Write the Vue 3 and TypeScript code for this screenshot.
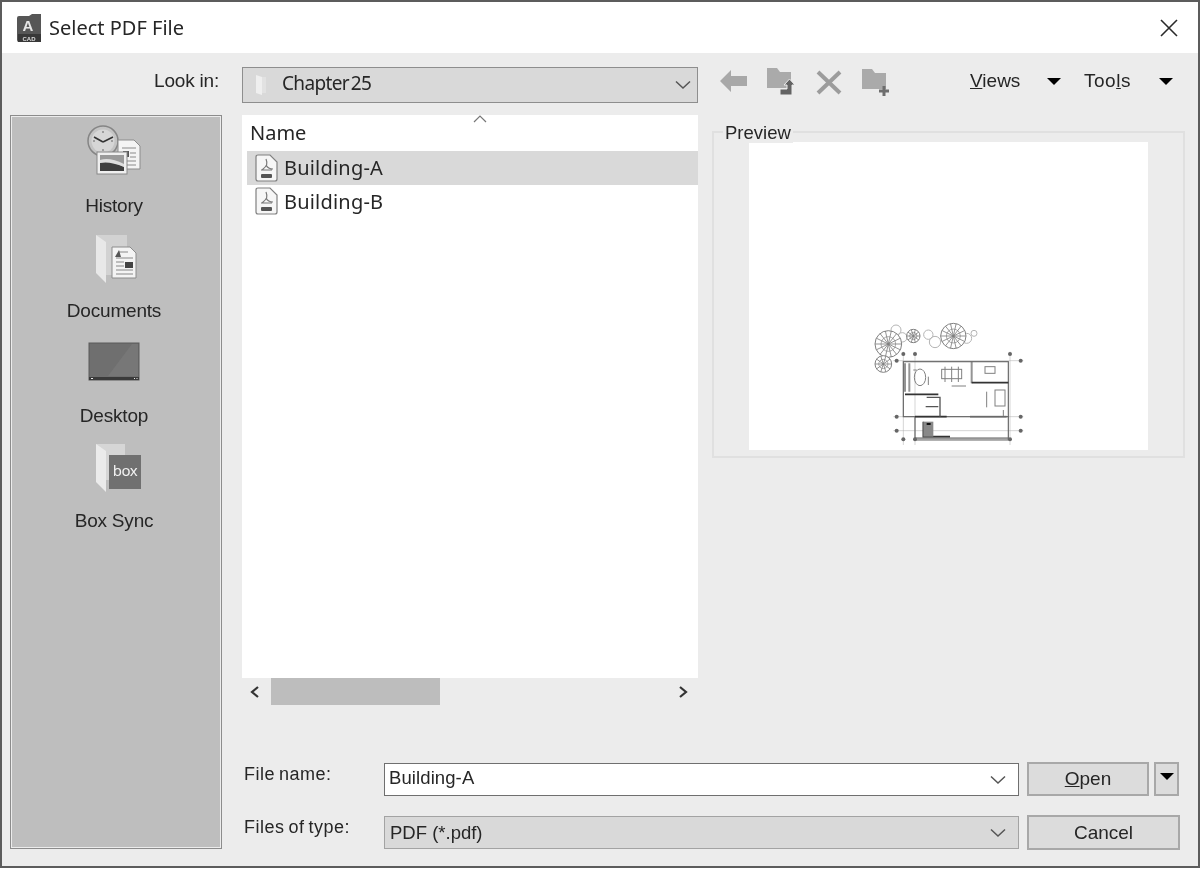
<template>
  <div class="window">
    <header class="titlebar">
      <svg class="app-icon" width="28" height="30" viewBox="0 0 28 30">
        <path d="M2 5 Q2 3 4 3 H14 L17 1 H26 V27 Q26 29 24 29 H4 Q2 29 2 27 Z" fill="#565656" />
        <rect x="3" y="21" width="23" height="8" fill="#383838" />
        <text x="13" y="18" text-anchor="middle" class="app-a">A</text>
        <text x="14" y="27.5" text-anchor="middle" class="app-cad">CAD</text>
      </svg>
      <span class="title">Select PDF File</span>
      <svg class="close" width="18" height="18" viewBox="0 0 18 18">
        <path d="M1 1 L17 17 M17 1 L1 17" stroke="#2a2a2a" stroke-width="1.6" fill="none" />
      </svg>
    </header>

    <div class="body">
      <div class="look-label">Look in:</div>

      <div class="combo-cell">
        <div class="combo">
          <svg class="combo-folder" width="16" height="24" viewBox="0 0 16 24">
            <path d="M3 2 L9 4 V22 L3 20 Z" fill="#efefef" />
            <path d="M9 4 H13 V20 H9 Z" fill="#e2e2e2" />
          </svg>
          <span class="combo-text">Chapter 25</span>
          <svg class="chevron" width="16" height="10" viewBox="0 0 16 10">
            <path d="M1 1.5 L8 8 L15 1.5" stroke="#555" stroke-width="1.5" fill="none" />
          </svg>
        </div>
      </div>

      <div class="toolbar">
        <svg class="tool" width="30" height="30" viewBox="0 0 30 30">
          <path d="M2 14 L13 3 V9 H29 V19 H13 V25 Z" fill="#a8a8a8" />
        </svg>
        <svg class="tool" width="30" height="30" viewBox="0 0 30 30">
          <path d="M1 1 H11 L14 5 H25 V21 H1 Z" fill="#aaa" />
          <path d="M14 28 V22 H21 V18 H18 L23.5 12 L29 18 H26 V28 Z" fill="#636363" stroke="#ececec" stroke-width="1" />
        </svg>
        <svg class="tool" width="30" height="30" viewBox="0 0 30 30">
          <path d="M4 5 L26 26 M26 5 L4 26" stroke="#9c9c9c" stroke-width="4" fill="none" />
        </svg>
        <svg class="tool" width="30" height="30" viewBox="0 0 30 30">
          <path d="M0 2 H10 L13 6 H24 V22 H0 Z" fill="#aaa" />
          <path d="M22 19 V29 M17 24 H27" stroke="#6e6e6e" stroke-width="3" fill="none" />
        </svg>
        <span class="menu menu-views"><u>V</u>iews</span>
        <i class="caret" />
        <span class="menu menu-tools">Too<u>l</u>s</span>
        <i class="caret" />
      </div>

      <aside class="places">
        <div class="place">
          <svg width="64" height="64" viewBox="0 0 64 64">
            <circle cx="21" cy="21" r="15" fill="#c4c4c4" stroke="#858585" stroke-width="1.5" />
            <circle cx="21" cy="21" r="11.5" fill="#d6d6d6" />
            <path d="M21 11 V13 M21 29 V31 M11 21 H13 M29 21 H31" stroke="#666" fill="none" />
            <path d="M21 22 L12 17 M21 22 L31 17" stroke="#333" stroke-width="1.6" fill="none" />
            <path d="M36 20 H52 L58 26 V49 H36 Z" fill="#f4f4f4" stroke="#8c8c8c" />
            <path d="M40 28 H54 M48 33 H54 M48 37 H54 M40 41 H54 M40 45 H54" stroke="#8a8a8a" fill="none" />
            <rect x="41" y="31" width="6" height="6" fill="#555" />
            <rect x="15" y="32" width="30" height="22" fill="#efefef" stroke="#888" />
            <rect x="18" y="35" width="24" height="16" fill="#9a9a9a" />
            <path d="M18 43 Q28 40 42 47 V51 H18 Z" fill="#3e3e3e" />
            <path d="M18 40 Q28 37 42 44 V47 Q28 41 18 43 Z" fill="#dedede" />
          </svg>
          <span>History</span>
        </div>
        <div class="place">
          <svg width="64" height="64" viewBox="0 0 64 64">
            <path d="M14 10 H45 V50 H22 Z" fill="#d2d2d2" />
            <path d="M14 10 L24 17 V58 L14 48 Z" fill="#e8e8e8" />
            <path d="M30 22 H48 L54 28 V53 H30 Z" fill="#f4f4f4" stroke="#8c8c8c" />
            <path d="M37 27 H46 M34 33 H51 M34 37 H42 M34 41 H42 M34 45 H51 M34 49 H51" stroke="#888" fill="none" />
            <path d="M33 32 L37 25 L39 32 Z" fill="#555" />
            <rect x="43" y="37" width="8" height="6" fill="#444" />
          </svg>
          <span>Documents</span>
        </div>
        <div class="place">
          <svg width="64" height="64" viewBox="0 0 64 64">
            <rect x="7" y="13" width="50" height="37" fill="#6f6f6f" stroke="#5a5a5a" />
            <path d="M26 46 L50 14 H56 V46 Z" fill="#777" />
            <rect x="7" y="47" width="50" height="3" fill="#3a3a3a" />
            <path d="M9 48.5 H11 M52 48.5 H53 M54.5 48.5 H55.5" stroke="#e8e8e8" fill="none" />
          </svg>
          <span>Desktop</span>
        </div>
        <div class="place">
          <svg width="64" height="64" viewBox="0 0 64 64">
            <path d="M14 9 H43 V45 H24 Z" fill="#d6d6d6" />
            <path d="M14 9 L24 16 V57 L14 47 Z" fill="#ebebeb" />
            <rect x="27" y="20" width="32" height="34" fill="#707070" />
            <text x="43" y="41" text-anchor="middle" class="box-word">box</text>
          </svg>
          <span>Box Sync</span>
        </div>
      </aside>

      <section class="browser">
        <div class="list">
          <svg class="sort" width="14" height="8" viewBox="0 0 14 8">
            <path d="M1 7 L7 1 L13 7" stroke="#777" stroke-width="1.2" fill="none" />
          </svg>
          <div class="list-head">Name</div>
          <div
            v-for="file in files"
            :key="file.name"
            class="row"
            :class="{ selected: file.selected }"
          >
            <svg width="24" height="28" viewBox="0 0 24 28">
              <path d="M2 3 Q2 1 4 1 H16 L23 8 V25 Q23 27 21 27 H4 Q2 27 2 25 Z" fill="#f6f6f6" stroke="#808080" stroke-width="1.2" />
              <path d="M12 5 C14 10 13 12 8 16 M12 11 C14 15 17 15 19 15 M7 16 H18" stroke="#777" stroke-width="1.2" fill="none" />
              <rect x="7" y="20" width="11" height="4" rx="1" fill="#555" />
            </svg>
            <span>{{ file.name }}</span>
          </div>
        </div>
        <div class="hscroll">
          <svg width="12" height="14" viewBox="0 0 12 14">
            <path d="M9 2 L3 7 L9 12" stroke="#333" stroke-width="2.2" fill="none" />
          </svg>
          <div class="thumb" />
          <svg class="hscroll-right" width="12" height="14" viewBox="0 0 12 14">
            <path d="M3 2 L9 7 L3 12" stroke="#333" stroke-width="2.2" fill="none" />
          </svg>
        </div>
      </section>

      <section class="preview">
        <span class="preview-legend">Preview</span>
        <div class="preview-page">
          <svg class="plan" width="180" height="130" viewBox="0 0 540 390">
            <g fill="none" stroke="#b4b4b4" stroke-width="3">
              <circle cx="108" cy="30" r="15" />
              <circle cx="127" cy="52" r="14" />
              <circle cx="205" cy="44" r="14" />
              <circle cx="225" cy="66" r="17" />
              <circle cx="320" cy="55" r="15" />
              <circle cx="342" cy="40" r="9" />
            </g>
            <g v-for="tree in trees" :key="tree.cx" fill="none" stroke="#808080" stroke-width="3">
              <circle :cx="tree.cx" :cy="tree.cy" :r="tree.r" fill="#fff" />
              <circle :cx="tree.cx" :cy="tree.cy" :r="tree.r * 0.55" stroke-width="2" />
              <path :d="tree.spokes" stroke-width="2.5" />
            </g>
            <g fill="none" stroke="#aaa" stroke-width="1.5">
              <path d="M130 95 V375 M165 95 V375 M450 95 V375 M100 122 H490 M100 290 H490 M100 332 H490" />
            </g>
            <g fill="none" stroke="#808080" stroke-width="3">
              <rect x="245" y="148" width="60" height="28" />
              <path d="M255 140 V186 M275 140 V186 M295 140 V186" />
              <ellipse cx="180" cy="172" rx="17" ry="25" />
              <rect x="405" y="210" width="30" height="48" />
              <rect x="375" y="140" width="30" height="20" />
              <path d="M160 150 H170 M205 170 V195 M275 198 H318 M380 215 V262 M430 270 V290" />
            </g>
            <g fill="none" stroke="#949494" stroke-width="6">
              <path d="M135 130 V215 M148 130 V215 M335 125 V190 M330 290 H440 M165 355 H445" />
            </g>
            <g fill="none" stroke="#666" stroke-width="3.5">
              <rect x="130" y="125" width="315" height="165" />
              <path d="M165 290 V360 H445 V290" />
            </g>
            <g fill="none" stroke="#333" stroke-width="5">
              <path d="M135 223 H235 M335 188 H445 M165 290 H260 M190 305 V350 H270" />
              <path d="M200 232 H240 V290 M197 260 H235" stroke="#555" stroke-width="4" />
            </g>
            <rect x="190" y="305" width="30" height="45" fill="#888" />
            <path d="M200 312 H212" stroke="#111" stroke-width="6" />
            <g fill="#666">
              <circle v-for="mark in gridMarks" :key="mark[0] + '-' + mark[1]" :cx="mark[0]" :cy="mark[1]" r="6" />
            </g>
          </svg>
        </div>
      </section>

      <div class="form">
        <div class="form-row">
          <label>File name:</label>
          <div class="field field-input">
            <span>Building-A</span>
            <svg class="chevron" width="16" height="10" viewBox="0 0 16 10">
              <path d="M1 1.5 L8 8 L15 1.5" stroke="#555" stroke-width="1.5" fill="none" />
            </svg>
          </div>
          <button class="btn btn-open"><u>O</u>pen</button>
          <button class="btn btn-drop"><i class="caret" /></button>
        </div>
        <div class="form-row">
          <label>Files of type:</label>
          <div class="field field-select">
            <span>PDF (*.pdf)</span>
            <svg class="chevron" width="16" height="10" viewBox="0 0 16 10">
              <path d="M1 1.5 L8 8 L15 1.5" stroke="#555" stroke-width="1.5" fill="none" />
            </svg>
          </div>
          <button class="btn btn-cancel">Cancel</button>
        </div>
      </div>
    </div>
  </div>
</template>

<script setup lang="ts">
interface PdfFile {
  name: string
  selected: boolean
}

const files: PdfFile[] = [
  { name: 'Building-A', selected: true },
  { name: 'Building-B', selected: false },
]

// radial branches for the trees on the floor plan thumbnail
function makeTree(cx: number, cy: number, r: number, count: number) {
  let spokes = ''
  for (let i = 0; i < count; i++) {
    const a = (i / count) * Math.PI * 2
    spokes += `M${cx} ${cy} L${(cx + Math.cos(a) * r).toFixed(1)} ${(cy + Math.sin(a) * r).toFixed(1)} `
  }
  return { cx, cy, r, spokes }
}

const trees = [
  makeTree(85, 72, 40, 14),
  makeTree(70, 132, 25, 10),
  makeTree(160, 48, 20, 10),
  makeTree(280, 48, 38, 14),
]

const gridMarks: [number, number][] = [
  [130, 102], [165, 102], [450, 102],
  [110, 122], [482, 122],
  [110, 290], [482, 290],
  [110, 332], [482, 332],
  [130, 358], [165, 358], [450, 358],
]
</script>

<style>
html,
body {
  margin: 0;
  background: #fff;
}
</style>

<style scoped>
.window {
  box-sizing: border-box;
  width: 1200px;
  height: 868px;
  border: 2px solid #5c5c5c;
  background: #ececec;
  color: #262626;
  font-family: "Liberation Sans", Arial, sans-serif;
  font-size: 19px;
  overflow: hidden;
  filter: blur(0.4px);
}

.titlebar {
  height: 51px;
  background: #fff;
  display: flex;
  align-items: center;
  padding: 0 20px 0 13px;
}

.app-icon {
  margin-right: 6px;
}

.app-a {
  font: bold 15px "Liberation Sans", sans-serif;
  fill: #e6e6e6;
}

.app-cad {
  font: bold 6px "Liberation Sans", sans-serif;
  fill: #ddd;
}

.box-word {
  font: 15px "Noto Sans", sans-serif;
  fill: #f2f2f2;
  letter-spacing: -0.5px;
}

.title {
  font-family: "Noto Sans", sans-serif;
  font-size: 20px;
}

.close {
  margin-left: auto;
}

.body {
  display: grid;
  grid-template-columns: 232px 470px 473px;
  grid-template-rows: 48px 590px 144px;
  padding: 14px 0 0 8px;
}

.look-label {
  text-align: right;
  padding-right: 23px;
  line-height: 28px;
  letter-spacing: -0.2px;
}

.combo {
  box-sizing: border-box;
  width: 456px;
  height: 36px;
  background: #d9d9d9;
  border: 1px solid #8e8e8e;
  display: flex;
  align-items: center;
  padding: 0 6px 0 10px;
}

.combo-folder {
  margin-right: 13px;
}

.combo-text {
  font-family: "Noto Sans", sans-serif;
  font-size: 19px;
  letter-spacing: -0.65px;
  word-spacing: -2.5px;
  padding-bottom: 5px;
}

.chevron {
  margin-left: auto;
}

.toolbar {
  display: flex;
  align-items: flex-start;
  padding-left: 6px;
}

.tool {
  margin-right: 18px;
}

.menu {
  line-height: 28px;
  font-size: 19px;
}

.menu-views {
  margin-left: 60px;
  width: 77px;
}

.menu-tools {
  margin-left: 23px;
  width: 75px;
  letter-spacing: 0.5px;
}

.caret {
  display: block;
  width: 0;
  height: 0;
  margin-top: 11px;
  border-left: 7px solid transparent;
  border-right: 7px solid transparent;
  border-top: 7px solid #000;
}

.places {
  grid-row: 2 / 4;
  box-sizing: border-box;
  width: 212px;
  background: #bebebe;
  border: 1px solid #8c8c8c;
  box-shadow: inset 0 0 0 1px #ececec;
  padding: 4px 4px 0 0;
}

.place {
  height: 105px;
  display: flex;
  flex-direction: column;
  align-items: center;
  gap: 11px;
  font-size: 19px;
  letter-spacing: -0.2px;
}

.browser {
  width: 456px;
  display: flex;
  flex-direction: column;
}

.list {
  position: relative;
  height: 563px;
  background: #fff;
  padding-left: 5px;
  box-sizing: border-box;
  font-family: "Noto Sans", sans-serif;
  font-size: 20px;
}

.sort {
  position: absolute;
  left: 231px;
  top: 0;
}

.list-head {
  height: 36px;
  line-height: 36px;
  padding-left: 3px;
}

.row {
  height: 33.5px;
  display: flex;
  align-items: center;
  gap: 5px;
  padding-left: 7px;
  letter-spacing: 0.2px;
}

.row span {
  margin-left: 1px;
}

.row.selected {
  background: #d9d9d9;
}

.hscroll {
  height: 27px;
  display: flex;
  align-items: center;
  padding: 0 9px 0 7px;
}

.thumb {
  width: 169px;
  height: 27px;
  margin-left: 10px;
  background: #bdbdbd;
}

.hscroll-right {
  margin-left: auto;
}

.preview {
  position: relative;
  box-sizing: border-box;
  width: 473px;
  height: 327px;
  margin-top: 16px;
  border: 2px solid #e0e0e0;
  padding: 9px 35px 5px;
}

.preview-legend {
  position: absolute;
  left: 9px;
  top: -10px;
  padding: 0 2px;
  background: #ececec;
  font-size: 18.5px;
  line-height: 20px;
}

.preview-page {
  height: 308px;
  background: #fff;
  display: flex;
  justify-content: center;
  align-items: flex-end;
  padding-left: 3px;
}

.plan {
  filter: blur(0.6px);
}

.form {
  grid-column: 2 / 4;
  padding: 58px 0 0 2px;
  display: flex;
  flex-direction: column;
  gap: 20px;
}

.form-row {
  display: flex;
  height: 33px;
  align-items: stretch;
}

.form-row label {
  width: 140px;
  line-height: 22px;
  font-size: 18px;
  letter-spacing: 0.5px;
  word-spacing: -1.5px;
}

.field {
  box-sizing: border-box;
  width: 635px;
  display: flex;
  align-items: center;
  font-size: 18.5px;
  padding: 0 12px 0 3px;
}

.field-input {
  background: #fff;
  border: 1px solid #6f6f6f;
  padding-left: 4px;
}

.field-input span {
  padding-bottom: 3px;
  letter-spacing: 0.1px;
}

.field-select {
  background: #d9d9d9;
  border: 1px solid #a3a3a3;
  padding-left: 5px;
}

.btn {
  box-sizing: border-box;
  background: #dcdcdc;
  border: 2px solid #a8a8a8;
  color: #262626;
  font-family: "Liberation Sans", sans-serif;
  font-size: 19px;
  padding: 0;
}

.btn-open {
  width: 122px;
  margin: -1px 0 0 8px;
}

.btn-drop {
  width: 25px;
  margin: -1px 0 0 5px;
  display: flex;
  justify-content: center;
}

.btn-drop .caret {
  margin-top: 9px;
}

.btn-cancel {
  width: 153px;
  height: 35px;
  margin: -1px 0 0 8px;
}
</style>
